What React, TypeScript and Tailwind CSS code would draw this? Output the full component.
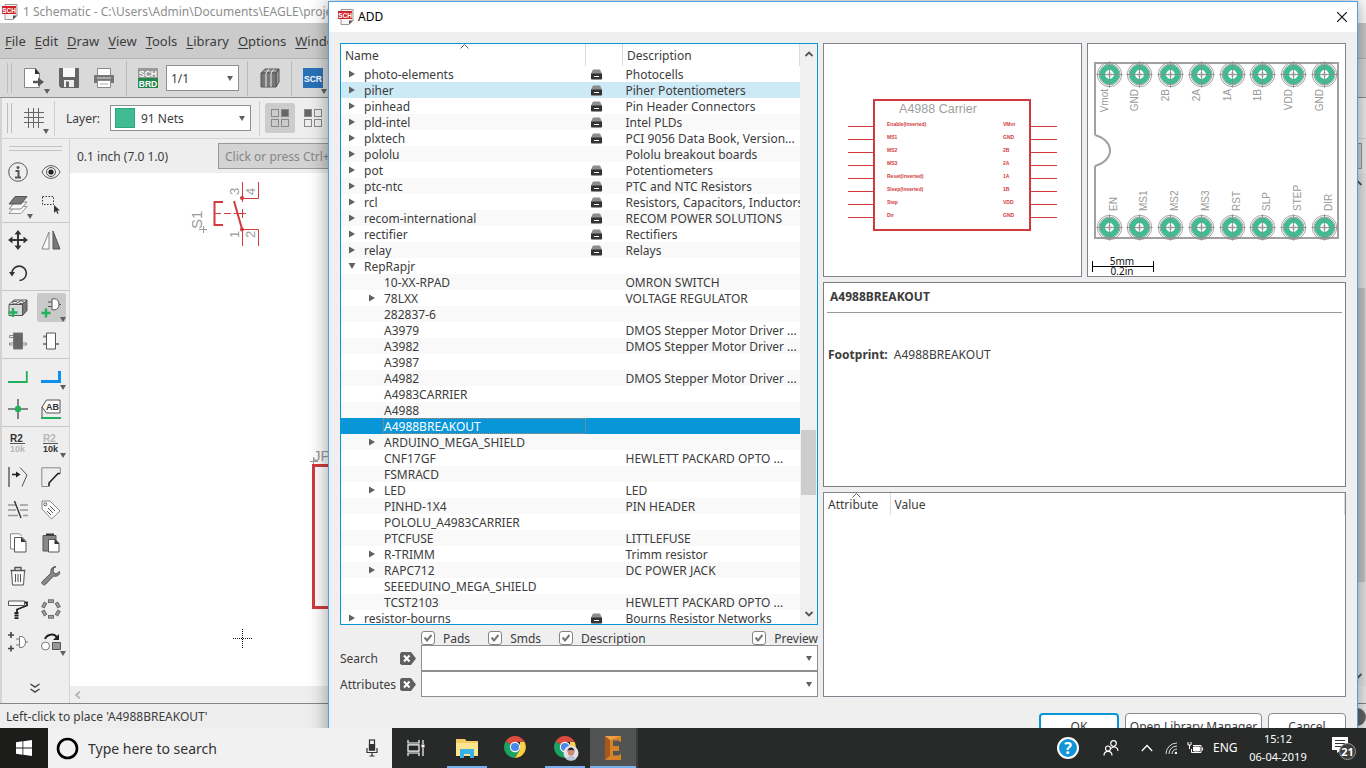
import React from "react";

type Row = {
  name: string;
  desc?: string;
  level?: 0 | 1;
  state?: "closed" | "open" | "leaf";
  managed?: boolean;
};

const rows: Row[] = [
  { name: "photo-elements", desc: "Photocells", managed: true },
  { name: "piher", desc: "Piher Potentiometers", managed: true },
  { name: "pinhead", desc: "Pin Header Connectors", managed: true },
  { name: "pld-intel", desc: "Intel PLDs", managed: true },
  { name: "plxtech", desc: "PCI 9056 Data Book, Version...", managed: true },
  { name: "pololu", desc: "Pololu breakout boards" },
  { name: "pot", desc: "Potentiometers", managed: true },
  { name: "ptc-ntc", desc: "PTC and NTC Resistors", managed: true },
  { name: "rcl", desc: "Resistors, Capacitors, Inductors", managed: true },
  { name: "recom-international", desc: "RECOM POWER SOLUTIONS", managed: true },
  { name: "rectifier", desc: "Rectifiers", managed: true },
  { name: "relay", desc: "Relays", managed: true },
  { name: "RepRapjr", state: "open" },
  { name: "10-XX-RPAD", desc: "OMRON SWITCH", level: 1, state: "leaf" },
  { name: "78LXX", desc: "VOLTAGE REGULATOR", level: 1 },
  { name: "282837-6", level: 1, state: "leaf" },
  { name: "A3979", desc: "DMOS Stepper Motor Driver ...", level: 1, state: "leaf" },
  { name: "A3982", desc: "DMOS Stepper Motor Driver ...", level: 1, state: "leaf" },
  { name: "A3987", level: 1, state: "leaf" },
  { name: "A4982", desc: "DMOS Stepper Motor Driver ...", level: 1, state: "leaf" },
  { name: "A4983CARRIER", level: 1, state: "leaf" },
  { name: "A4988", level: 1, state: "leaf" },
  { name: "A4988BREAKOUT", level: 1, state: "leaf" },
  { name: "ARDUINO_MEGA_SHIELD", level: 1 },
  { name: "CNF17GF", desc: "HEWLETT PACKARD OPTO ...", level: 1, state: "leaf" },
  { name: "FSMRACD", level: 1, state: "leaf" },
  { name: "LED", desc: "LED", level: 1 },
  { name: "PINHD-1X4", desc: "PIN HEADER", level: 1, state: "leaf" },
  { name: "POLOLU_A4983CARRIER", level: 1, state: "leaf" },
  { name: "PTCFUSE", desc: "LITTLEFUSE", level: 1, state: "leaf" },
  { name: "R-TRIMM", desc: "Trimm resistor", level: 1 },
  { name: "RAPC712", desc: "DC POWER JACK", level: 1 },
  { name: "SEEEDUINO_MEGA_SHIELD", level: 1, state: "leaf" },
  { name: "TCST2103", desc: "HEWLETT PACKARD OPTO ...", level: 1, state: "leaf" },
  { name: "resistor-bourns", desc: "Bourns Resistor Networks", managed: true },
];

const SELECTED = "A4988BREAKOUT";
const HOVERED = "piher";

function Down({ className = "" }: { className?: string }) {
  return (
    <svg className={"pointer-events-none h-[5px] w-[6px] " + className} viewBox="0 0 6 5" aria-hidden="true">
      <path d="M0 0h6L3 5z" fill="#606060" />
    </svg>
  );
}

function SchLogo() {
  return (
    <svg className="h-4 w-4 shrink-0" viewBox="0 0 16 16" aria-hidden="true">
      <path d="M3 .5h12v11l-4 4H3z" fill="#f4f4f4" stroke="#9a9a9a" />
      <path d="M15 11.5h-4v4z" fill="#555" />
      <rect x="0" y="2" width="14" height="8" fill="#d2232a" />
      <text x="7" y="8.500" textAnchor="middle" fontSize="6.500" fontWeight="700" fill="#fff" fontFamily="Liberation Sans, sans-serif">SCH</text>
    </svg>
  );
}

function Icon({ children }: { children: React.ReactNode }) {
  return (
    <svg className="block h-5 w-5 shrink-0" viewBox="0 0 20 20" fill="none" stroke="#555" aria-hidden="true">
      {children}
    </svg>
  );
}

const label = { fontFamily: "Liberation Sans, sans-serif", fontWeight: 700, stroke: "none" };

const icons: Record<string, React.ReactNode> = {
  info: (
    <>
      <circle cx="10" cy="10" r="9.300" />
      <path d="M7.500 9h3V15M7 15.500h6" strokeWidth="2" />
      <circle cx="10" cy="5.500" r="1.500" fill="#555" stroke="none" />
    </>
  ),
  eye: (
    <>
      <path d="M1 10c4-8.500 14-8.500 18 0-4 8.500-14 8.500-18 0z" />
      <circle cx="10" cy="10" r="4.500" />
      <circle cx="10" cy="10" r="2.600" fill="#222" stroke="none" />
    </>
  ),
  layers: (
    <>
      <path d="M1 18.500L7 11.500h12l-6 7z" fill="#f8f8f8" stroke="#999" />
      <path d="M1 14L7 7h12l-6 7z" fill="#f8f8f8" stroke="#888" />
      <path d="M1 9L7 1.500h12L13 9z" fill="#777" />
    </>
  ),
  group: (
    <>
      <path d="M1.500 1.500h11v8h-11z" stroke="#333" strokeDasharray="1.500 1.500" />
      <path d="M13 10v8l2-2 1.500 3 1-.5-1.300-3H19z" fill="#333" stroke="none" />
    </>
  ),
  move: (
    <path
      d="M10 0l3.500 4.500h-2.500v4.500h4.500V6.500l4.500 3.500-4.500 3.500V11H11v4.500h2.500L10 20l-3.500-4.500H9V11H4.500v2.500L0 10l4.500-3.500V9H9V4.500H6.500z"
      fill="#333"
      stroke="none"
    />
  ),
  mirror: (
    <>
      <path d="M8 2v17H1z" fill="#fafafa" stroke="#888" />
      <path d="M12 1v18h7z" fill="#777" />
    </>
  ),
  rotate: (
    <>
      <path d="M4 9.500A7.200 7.200 0 1 1 11.500 17.500" stroke="#333" strokeWidth="1.600" />
      <path d="M1 9h6l-3 4.500z" fill="#333" stroke="none" />
    </>
  ),
  library: (
    <>
      <path d="M1 6.500L6 2h13l-4.500 4.500z" fill="#eee" />
      <path d="M1 6.500h13.500v11H1z" fill="#d8d8d8" />
      <path d="M14.500 6.500L19 2v10.500l-4.500 5z" fill="#777" />
      <ellipse cx="7" cy="4.700" rx="2.500" ry="1.300" fill="#fff" />
      <ellipse cx="13" cy="4.200" rx="2.500" ry="1.300" fill="#fff" />
      <path d="M5 10v9M.5 14.500h9" stroke="#1fb25a" strokeWidth="2.400" />
    </>
  ),
  addPart: (
    <>
      <path d="M11 .8h2.500c3 0 4.500 2.500 4.500 5.500s-1.500 5.500-4.500 5.500H11zM7 4h4M7 8.500h4M18 6.500h2" fill="#fff" />
      <path d="M5 10.500v9M.5 15h9" stroke="#1fb25a" strokeWidth="2.400" />
    </>
  ),
  chipDark: (
    <>
      <path d="M1.500 4.500h4v2h-4zM1.500 12h4v2h-4zM14.500 12h4v2h-4z" stroke="#888" />
      <path d="M5.500 2h9v16h-9z" fill="#666" stroke="#777" />
    </>
  ),
  chipLight: (
    <>
      <path d="M2 5.500h4M2 13h4M14 13h4" stroke="#888" strokeWidth="2" />
      <path d="M5.500 2h9v16h-9z" fill="#fff" />
    </>
  ),
  net: <path d="M0 16h18.800V5" stroke="#1fb25a" strokeWidth="1.800" />,
  bus: <path d="M0 15.500h18.500V5" stroke="#0b90ee" strokeWidth="3" />,
  junction: (
    <>
      <path d="M10 0v20M0 10h20" stroke="#666" strokeWidth="1.600" />
      <circle cx="10" cy="10" r="3.200" fill="#1fb25a" stroke="none" />
    </>
  ),
  netLabel: (
    <>
      <path d="M1 19V8l4.500-7H19v13H5.500L1 8" fill="#fafafa" />
      <text x="11.500" y="11" textAnchor="middle" fontSize="9" fill="#333" {...label}>AB</text>
      <path d="M0 19h20" stroke="#1fb25a" strokeWidth="2" />
    </>
  ),
  nameTool: (
    <>
      <text x="8.500" y="8" textAnchor="middle" fontSize="10" fill="#333" {...label}>R2</text>
      <path d="M2 9.500h15" />
      <text x="9.500" y="18" textAnchor="middle" fontSize="9" fill="#b8b8b8" {...label}>10k</text>
    </>
  ),
  valueTool: (
    <>
      <text x="8.500" y="8" textAnchor="middle" fontSize="10" fill="#b8b8b8" {...label}>R2</text>
      <path d="M2 9.500h15" />
      <text x="9.500" y="18" textAnchor="middle" fontSize="9" fill="#333" {...label}>10k</text>
    </>
  ),
  miter: (
    <>
      <path d="M1 0v20" strokeWidth="1.400" />
      <path d="M12 .5l7 7.500-5 11.500" />
      <path d="M4 7.500h5" stroke="#222" strokeWidth="1.600" />
      <path d="M8 4.500l4.500 3-4.500 3z" fill="#222" stroke="none" />
    </>
  ),
  split: (
    <>
      <path d="M7 19.500H.8V.8h18.500V7" stroke="#888" />
      <path d="M19 6.500h-2L8 16v3.500" stroke="#222" strokeWidth="1.600" />
    </>
  ),
  slice: (
    <>
      <path d="M0 5h8M12 5h8M0 10h8M12 10h8M0 15.500h10M15 15.500h5" stroke="#999" strokeWidth="1.400" />
      <path d="M6.500 1l6.500 17" stroke="#333" strokeWidth="1.400" />
    </>
  ),
  tag: (
    <>
      <path d="M1 1h8l10 10-8.500 8L1 9z" fill="#fafafa" stroke="#888" />
      <circle cx="4.300" cy="4.300" r="1.500" />
      <path d="M9 6l5 5M7 8l5 5M6 11l4 4" />
    </>
  ),
  copy: (
    <>
      <path d="M7 16H2.500V.8h9l2 2.200" fill="#fff" stroke="#888" />
      <path d="M6.500 4.500h8l3.500 4V19H6.500z" fill="#fff" />
      <path d="M13 4v5h5z" fill="#333" stroke="none" />
    </>
  ),
  paste: (
    <>
      <path d="M2 2.500h13V18H2z" fill="#888" />
      <path d="M5 1.500h8" stroke="#333" strokeWidth="2" />
      <path d="M7.500 6.500h7l3.500 4V19H7.500z" fill="#fff" />
      <path d="M13.500 6v5h5z" fill="#333" stroke="none" />
    </>
  ),
  trash: (
    <>
      <path d="M3.500 5l1 14h11l1-14" fill="#f8f8f8" />
      <path d="M2.500 4.500h15M7 4V1.500h6V4" strokeWidth="1.400" />
      <path d="M7.500 8v8M10 8v8M12.500 8v8" />
    </>
  ),
  wrench: (
    <path
      d="M18.500 5.500L15 8l-3-2 .5-4L15 .8c-3-.6-6 2-5 6.200L1.300 15.500c-1.500 1.500 1 4.500 3 3L12.500 10c4 1 7-1.500 6-4.500z"
      fill="#888"
      stroke="#555"
    />
  ),
  paint: (
    <>
      <path d="M.5 2h16v4.500H.5z" fill="#fafafa" />
      <path d="M17 3.500h2v3l-10 4V13" stroke="#222" strokeWidth="1.800" />
      <path d="M8.500 13v7" stroke="#222" strokeWidth="4" strokeDasharray="2 .6" />
    </>
  ),
  optimize: (
    <g fill="#a0a0a0" stroke="#666" strokeWidth=".9">
      {[0, 60, 120, 180, 240, 300].map((a) => (
        <rect key={a} x="7.500" y=".8" width="5" height="2.800" transform={`rotate(${a} 10 10)`} />
      ))}
    </g>
  ),
  gate: (
    <>
      <path d="M3 0v6M0 3h6M3 13.500v6M0 16.500h6" stroke="#444" strokeWidth="1.600" />
      <path d="M11.500 4.500h1.500c3 0 4.500 2.500 4.500 5.500s-1.500 5.500-4.500 5.500h-1.500zM8 7h3.500M8 13h3.500M17.500 10H20" fill="#fff" stroke="#777" />
    </>
  ),
  replace: (
    <>
      <path d="M4 7c2-5 9-6 12-1.500" stroke="#222" strokeWidth="2" />
      <path d="M18 2v6h-6z" fill="#222" stroke="none" />
      <circle cx="4.500" cy="14" r="4" fill="#fff" stroke="#777" />
      <path d="M11.500 10.500h8v7h-8z" fill="#999" />
    </>
  ),
};

const groups: { name: string; icon: string; menu?: boolean; on?: boolean }[][] = [
  [
    { name: "Info", icon: "info" },
    { name: "Show", icon: "eye" },
    { name: "Layer settings", icon: "layers", menu: true },
    { name: "Group", icon: "group" },
  ],
  [
    { name: "Move", icon: "move" },
    { name: "Mirror", icon: "mirror" },
    { name: "Rotate", icon: "rotate" },
  ],
  [
    { name: "Design block", icon: "library" },
    { name: "Add part", icon: "addPart", menu: true, on: true },
    { name: "Replace", icon: "chipDark" },
    { name: "Package", icon: "chipLight" },
  ],
  [
    { name: "Net", icon: "net" },
    { name: "Bus", icon: "bus", menu: true },
    { name: "Junction", icon: "junction" },
    { name: "Label", icon: "netLabel" },
  ],
  [
    { name: "Name", icon: "nameTool" },
    { name: "Value", icon: "valueTool", menu: true },
    { name: "Miter", icon: "miter" },
    { name: "Split", icon: "split" },
    { name: "Slice", icon: "slice" },
    { name: "Attribute", icon: "tag" },
    { name: "Copy", icon: "copy" },
    { name: "Paste", icon: "paste" },
    { name: "Delete", icon: "trash" },
    { name: "Change", icon: "wrench" },
    { name: "Paint roller", icon: "paint" },
    { name: "Optimize", icon: "optimize" },
    { name: "Invoke", icon: "gate" },
    { name: "Swap", icon: "replace", menu: true },
  ],
];

function ToolPanel() {
  return (
    <div className="flex w-[70px] shrink-0 flex-col border-r border-l-2 border-[#d4d4d4] bg-[#eeeeee]">
      <div className="mx-[7px] mt-[7px] h-[5px] shrink-0 border-y border-[#c4c4c4]" />
      <div className="mt-1 flex flex-col gap-px">
        {groups.map((g, i) => (
          <div key={i} className={"grid grid-cols-[33px_33px] " + (i ? "border-t border-[#c6c6c6]" : "")}>
            {g.map((t) => (
              <button
                key={t.name}
                aria-label={t.name}
                className={"relative m-0.5 h-[29px] w-[29px] rounded-[2px] p-1 " + (t.on ? "bg-[#c9c9c9]" : "")}
              >
                <Icon>{icons[t.icon]}</Icon>
                {t.menu && <Down className="absolute right-0 bottom-0" />}
              </button>
            ))}
          </div>
        ))}
      </div>
      <button aria-label="More tools" className="mx-auto mt-6 pr-0.5">
        <svg className="h-3 w-3" viewBox="0 0 12 12" fill="none" stroke="#444" strokeWidth="1.500">
          <path d="M1.500 2L6 5l4.500-3M1.500 7L6 10l4.500-3" />
        </svg>
      </button>
    </div>
  );
}

const menus = ["File", "Edit", "Draw", "View", "Tools", "Library", "Options", "Window"];

function Grip() {
  return <div className="mr-3 h-[30px] w-[5px] shrink-0 border-x border-[#bdbdbd]" />;
}

function Sep({ className = "" }: { className?: string }) {
  return <div className={"h-[35px] w-px shrink-0 bg-[#b9b9b9] " + className} />;
}

function MainToolbar() {
  return (
    <div className="flex h-[39px] shrink-0 items-center border-b border-[#8d8d8d] bg-[#d9d9d9] pl-[7px]">
      <Grip />
      <button aria-label="Open" className="relative h-5 w-[26px]">
        <Icon>
          <path d="M.5.500h11l4 5v14H.5z" fill="#fff" stroke="#888" />
          <path d="M11 0v6h5z" fill="#333" stroke="none" />
          <path d="M9 14h6" stroke="#555" strokeWidth="2.500" />
          <path d="M14 9.500l6 4.500-6 4.500z" fill="#555" stroke="none" />
        </Icon>
        <Down className="absolute right-0 -bottom-1.5" />
      </button>
      <button aria-label="Save" className="ml-[9px]">
        <Icon>
          <path d="M0 0h20v20H2l-2-2z" fill="#666" stroke="none" />
          <path d="M4 0h12v9H4z" fill="#fafafa" stroke="none" />
          <path d="M5 12h10v7H5z" fill="#eee" stroke="none" />
          <path d="M7 13.500h3V19H7z" fill="#666" stroke="none" />
        </Icon>
      </button>
      <button aria-label="Print" className="ml-[15px]">
        <Icon>
          <path d="M3.500.500h13v7h-13z" fill="#fff" stroke="#888" />
          <path d="M0 7h20v8H0z" fill="#777" stroke="none" />
          <path d="M3 10h14" stroke="#ddd" />
          <path d="M3.500 12.500h13v7h-13z" fill="#fff" stroke="#888" />
          <path d="M6 16h8" stroke="#aaa" />
        </Icon>
      </button>
      <Sep className="mr-[11px] ml-3" />
      <button aria-label="Switch to board">
        <Icon>
          <path d="M0 0h20v10H0z" fill="#999" stroke="none" />
          <path d="M0 10h20v10H0z" fill="#23864a" stroke="none" />
          <text x="10" y="8.500" textAnchor="middle" fontSize="8.500" fill="#fff" {...label}>SCH</text>
          <text x="10" y="18.500" textAnchor="middle" fontSize="8.500" fill="#fff" {...label}>BRD</text>
        </Icon>
      </button>
      <div className="relative ml-2 flex w-[73px] items-center border border-[#8f8f8f] bg-white">
        <select aria-label="Sheet" className="h-6 w-full appearance-none bg-transparent pt-0.5 pl-1 text-xs">
          <option>1/1</option>
        </select>
        <Down className="absolute right-[5px]" />
      </div>
      <Sep className="mr-3 ml-2" />
      <button aria-label="Library manager">
        <Icon>
          <path d="M1 5l4-4h14l-3 4zM16 5l3-4v13l-3 5z" fill="#999" />
          <path d="M1 5h15v14H1z" fill="#777" />
          <path d="M6 5v14M11 5v14M6 5l3-4M11 5l3-4" stroke="#eee" />
        </Icon>
      </button>
      <Sep className="mr-[11px] ml-[11px]" />
      <button aria-label="Run script" className="relative">
        <Icon>
          <path d="M0 0h20v20H0z" fill="#2a72b8" stroke="none" />
          <text x="10" y="13.500" textAnchor="middle" fontSize="8.500" fill="#fff" {...label}>SCR</text>
        </Icon>
        <Down className="absolute -right-1 -bottom-1.5" />
      </button>
    </div>
  );
}

function Squares({ at }: { at: "left" | "right" }) {
  return (
    <svg className="h-[18px] w-[18px]" viewBox="0 0 18 18" fill="none" stroke="#888" aria-hidden="true">
      <rect x=".5" y=".5" width="7" height="7" fill={at === "left" ? "#666" : "none"} />
      <rect x="10.500" y=".5" width="7" height="7" fill={at === "right" ? "#666" : "none"} />
      <rect x=".5" y="10.500" width="7" height="7" />
      <rect x="10.500" y="10.500" width="7" height="7" />
    </svg>
  );
}

function LayerToolbar() {
  return (
    <div className="flex h-[41px] shrink-0 items-center border-b border-l-2 border-[#d4d4d4] bg-[#eeeeee] pl-[5px]">
      <Grip />
      <button aria-label="Grid" className="relative h-5 w-[25px]">
        <Icon>
          <path d="M4.500 0v20M9.500 0v20M14.500 0v20M0 4.500h20M0 9.500h20M0 14.500h20" stroke="#666" />
        </Icon>
        <Down className="absolute right-0 -bottom-1.5" />
      </button>
      <Sep className="mr-[11px] ml-[5px] bg-[#cfcfcf]" />
      <label htmlFor="layer" className="w-11 pt-0.5 text-xs">
        Layer:
      </label>
      <div className="relative flex w-[141px] items-center border border-[#8f8f8f] bg-white pl-1">
        <span className="h-5 w-5 shrink-0 border border-[#2fa57c] bg-[#3fbc93]" />
        <select id="layer" className="h-6 w-full appearance-none bg-transparent pt-0.5 pl-1.5 text-xs">
          <option>91 Nets</option>
        </select>
        <Down className="absolute right-[5px]" />
      </div>
      <Sep className="mr-[5px] ml-2 bg-[#cfcfcf]" />
      <button aria-label="Layer preset 1" className="rounded-[2px] bg-[#cccccc] p-1.5">
        <Squares at="right" />
      </button>
      <button aria-label="Layer preset 2" className="ml-px p-2">
        <Squares at="left" />
      </button>
    </div>
  );
}

function Sheet() {
  return (
    <svg className="h-[513px] w-[258px] shrink-0" viewBox="70 173 258 513" fill="none" stroke="#d23a3e" aria-hidden="true">
      <path d="M242.500 182v20M242.500 198.500h16V182M242.500 246v-16.500h16V246" />
      <path d="M223 202h-8.500v23h8.500" strokeWidth="2" />
      <path d="M215 213.500h6M224 213.500h7M234 213.500h12M242.500 209v9" />
      <path d="M234 201l8 28" strokeWidth="2" />
      <circle cx="242" cy="198" r="2" fill="#d23a3e" stroke="none" />
      <circle cx="242" cy="229.500" r="2" fill="#d23a3e" stroke="none" />
      <g fill="#9a9a9a" stroke="none" fontFamily="Liberation Sans, sans-serif">
        <text transform="translate(202 229) rotate(-90)" fontSize="15">S1</text>
        <text transform="translate(239 195) rotate(-90)" fontSize="13">3</text>
        <text transform="translate(255 195) rotate(-90)" fontSize="13">4</text>
        <text transform="translate(239 238) rotate(-90)" fontSize="13">1</text>
        <text transform="translate(255 238) rotate(-90)" fontSize="13">2</text>
        <text x="313" y="461" fontSize="15">JP1</text>
      </g>
      <path d="M199 229.500h8M203.500 226v7M310 461.500h8M313.500 457v8" stroke="#999" />
      <path d="M330 465.500h-16.500v142H330" strokeWidth="3" />
      <path d="M233 638.500h20M242.500 629v19" stroke="#111" strokeDasharray="1 1" />
    </svg>
  );
}

function MainWindow() {
  return (
    <div className="flex h-full flex-col text-[#3c3c3c]">
      <div className="flex h-[23px] shrink-0 items-center gap-[5px] bg-white pl-0.5 text-xs text-[#8d8d8d]">
        <SchLogo />
        <span>1 Schematic - C:\Users\Admin\Documents\EAGLE\projects</span>
      </div>
      <div className="flex h-9 shrink-0 items-center gap-[9px] border-b border-[#b4b4b4] bg-[#cbcbcb] pt-0.5 pl-[5px] text-[13px]">
        {menus.map((m) => (
          <button key={m}>
            <span className="underline underline-offset-2">{m[0]}</span>
            {m.slice(1)}
          </button>
        ))}
      </div>
      <MainToolbar />
      <LayerToolbar />
      <div className="flex min-h-0 flex-1">
        <ToolPanel />
        <div className="flex min-w-0 flex-1 flex-col bg-white">
          <div className="flex h-[34px] shrink-0 items-center bg-[#eeeeee] pr-1 pl-[7px] text-xs">
            <span className="w-[141px] pt-0.5">0.1 inch (7.0 1.0)</span>
            <input
              aria-label="Command line"
              placeholder="Click or press Ctrl+L key to activate command line mode"
              className="h-[26px] min-w-0 flex-1 border border-[#9a9a9a] bg-[#d3d3d3] px-1.5 placeholder:text-[#868686]"
            />
          </div>
          <div className="flex min-h-0 flex-1">
            <div className="min-w-0 flex-1 overflow-hidden">
              <Sheet />
            </div>
            <div className="flex w-4 shrink-0 flex-col items-center bg-[#e6e6e6] py-1.5">
              <Chevron dir="up" />
              <div className="mt-[101px] mb-[90px] w-full flex-1 border-r border-[#e0e0e0] bg-[#c8c8c8]" />
              <Chevron dir="down" />
            </div>
          </div>
          <div className="flex h-[17px] shrink-0 items-center bg-[#eeeeee] pl-1">
            <svg className="h-2 w-2" viewBox="0 0 8 8" fill="none" stroke="#b5b5b5" strokeWidth="1.800" aria-hidden="true">
              <path d="M6 .5L2 4l4 3.500" />
            </svg>
          </div>
        </div>
      </div>
      <div className="flex h-[25px] shrink-0 items-center justify-between border-t border-[#868686] bg-[#eeeeee] pt-0.5 pl-1.5 text-xs">
        <span>Left-click to place 'A4988BREAKOUT'</span>
        <span className="h-[18px] w-[18px] rounded-full bg-[#666]" />
      </div>
    </div>
  );
}

function Chevron({ dir }: { dir: "up" | "down" }) {
  return (
    <svg className="h-2 w-2.5 shrink-0" viewBox="0 0 10 8" fill="none" stroke="#555" strokeWidth="1.800" aria-hidden="true">
      <path d={dir === "up" ? "M1.500 6L5 2.500 8.500 6" : "M1.500 2L5 5.500 8.500 2"} />
    </svg>
  );
}

function SortMark({ className = "" }: { className?: string }) {
  return (
    <svg className={"absolute top-0 h-[5px] w-[9px] " + className} viewBox="0 0 9 5" fill="none" stroke="#666" aria-hidden="true">
      <path d="M.5 4.500l4-4 4 4" />
    </svg>
  );
}

function Drawer() {
  return (
    <svg className="ml-[5px] block h-[11px] w-[11px]" viewBox="0 0 11 11" aria-label="Managed">
      <path d="M2 .5h7L11 5H0z" fill="#8d8d8d" />
      <path d="M0 4.500h11V10l-.5.500H.5L0 10z" fill="#333" />
      <path d="M3 7.500h5" stroke="#fff" />
    </svg>
  );
}

function Tree() {
  return (
    <div className="flex min-h-0 flex-1 overflow-hidden border border-[#0a95d6] bg-white">
      <div className="min-h-0 min-w-0 flex-1 overflow-hidden">
        <table className="w-full table-fixed border-collapse text-xs whitespace-nowrap">
          <colgroup>
            <col />
            <col className="w-[37px]" />
            <col className="w-[177px]" />
          </colgroup>
          <thead>
            <tr className="h-[22px] text-left">
              <th className="relative border-r border-[#dcdcdc] p-0 pt-0.5 pl-1 font-normal">
                <SortMark className="left-[119px]" />
                Name
              </th>
              <th className="border-r border-[#dcdcdc] p-0" aria-label="Managed" />
              <th className="border-r border-[#dcdcdc] p-0 pt-0.5 pl-1 font-normal">Description</th>
            </tr>
          </thead>
          <tbody>
            {rows.map((r, i) => {
              const selected = r.name === SELECTED;
              const bg = selected
                ? "bg-[#0996d9] text-white"
                : r.name === HOVERED
                  ? "bg-[#cce9f6]"
                  : i % 2
                    ? "bg-[#f9f9f9]"
                    : "bg-white";
              return (
                <tr key={r.name} className={"h-4 " + bg}>
                  <td className="p-0">
                    <div className={"flex h-4 items-center " + (r.level ? "pl-[27px]" : "pl-[7px]")}>
                      <span className="w-[15px] shrink-0">
                        {r.state !== "leaf" && (
                          <svg className="h-2 w-2" viewBox="0 0 8 8" aria-hidden="true">
                            <path d={r.state === "open" ? "M.5 1h7L4 7z" : "M1 .5v7L7 4z"} fill="#606060" />
                          </svg>
                        )}
                      </span>
                      <span
                        className={
                          "h-4 flex-1 pl-px leading-[18px] " +
                          (selected ? "outline-1 -outline-offset-1 outline-[#b98a63] outline-dotted" : "")
                        }
                      >
                        {r.name}
                      </span>
                    </div>
                  </td>
                  <td className="p-0">{r.managed && <Drawer />}</td>
                  <td className="p-0 pl-[3px]">
                    <div className="h-4 leading-[18px]">{r.desc}</div>
                  </td>
                </tr>
              );
            })}
          </tbody>
        </table>
      </div>
      <div className="flex w-[17px] shrink-0 flex-col items-center bg-[#f0f0f0] py-1.5">
        <Chevron dir="up" />
        <div className="flex-[372]" />
        <div className="w-[15px] flex-[65] bg-[#cdcdcd]" />
        <div className="flex-[115]" />
        <Chevron dir="down" />
      </div>
    </div>
  );
}

function Check({ id, text, className = "" }: { id: string; text: string; className?: string }) {
  return (
    <div className={"flex items-center gap-2 " + className}>
      <span className="relative h-3.5 w-3.5">
        <input
          id={id}
          type="checkbox"
          defaultChecked
          className="block h-3.5 w-3.5 appearance-none rounded-[3px] border border-[#858585] bg-white"
        />
        <svg className="pointer-events-none absolute top-[3px] left-[3px] h-2 w-2" viewBox="0 0 8 8" fill="none" stroke="#777" strokeWidth="2" aria-hidden="true">
          <path d="M.5 3.500L3 6.500 7.500 1" />
        </svg>
      </span>
      <label htmlFor={id} className="pt-0.5">
        {text}
      </label>
    </div>
  );
}

function ClearButton({ name }: { name: string }) {
  return (
    <button aria-label={name} className="w-[21px] shrink-0">
      <svg className="h-[13px] w-4" viewBox="0 0 16 13">
        <path d="M1.500 0h9.500l5 6.500L11 13H1.500L0 11.500v-10z" fill="#606060" />
        <path d="M4 3.500l5.500 6M9.500 3.500L4 9.500" stroke="#fff" strokeWidth="2" />
      </svg>
    </button>
  );
}

function Field({ id, text }: { id: string; text: string }) {
  return (
    <div className="flex items-center">
      <label htmlFor={id} className="w-[60px] shrink-0 pt-0.5">
        {text}
      </label>
      <ClearButton name={"Clear " + text} />
      <div className="relative flex flex-1 items-center border border-[#8f8f8f] bg-white">
        <input id={id} className="h-6 w-full min-w-0 bg-transparent px-1 outline-none" />
        <Down className="absolute right-[5px]" />
      </div>
    </div>
  );
}

const leftPins = ["Enable(Inverted)", "MS1", "MS2", "MS3", "Reset(Inverted)", "Sleep(Inverted)", "Step", "Dir"];
const rightPins = ["VMot", "GND", "2B", "2A", "1A", "1B", "VDD", "GND"];

function SymbolPreview() {
  return (
    <svg className="h-full w-full" viewBox="824 44 257 232" role="img" aria-label="Symbol preview">
      <rect x="874" y="100" width="156" height="130" fill="none" stroke="#d23a3e" strokeWidth="2" />
      <text x="938" y="113" textAnchor="middle" fontSize="12.500" fill="#a0a0a0" fontFamily="Liberation Sans, sans-serif">A4988 Carrier</text>
      {leftPins.map((p, i) => (
        <g key={i} fill="#d23a3e" fontFamily="Liberation Sans, sans-serif" fontSize="5" fontWeight="700">
          <path d={`M848 ${126.5 + 13 * i}h25M1031 ${126.5 + 13 * i}h26`} stroke="#d23a3e" />
          <text x="887" y={126 + 13 * i}>{p}</text>
          <text x="1003" y={126 + 13 * i}>{rightPins[i]}</text>
        </g>
      ))}
    </svg>
  );
}

const padX = [1109.5, 1139.5, 1170.5, 1201.5, 1232.5, 1262.5, 1293.5, 1324.5];
const topPads = ["Vmot", "GND", "2B", "2A", "1A", "1B", "VDD", "GND"];
const bottomPads = ["EN", "MS1", "MS2", "MS3", "RST", "SLP", "STEP", "DIR"];

function Pad({ x, y }: { x: number; y: number }) {
  return (
    <g fill="none" stroke="#8c8c8c">
      <circle cx={x} cy={y} r="7.200" stroke="#3fbc93" strokeWidth="5.600" />
      <circle cx={x} cy={y} r="12.200" strokeWidth=".8" />
      <circle cx={x} cy={y} r="10.500" strokeWidth=".8" />
      <path d={`M${x - 2.5} ${y}l2.500-2.500 2.500 2.500-2.500 2.500z`} strokeWidth=".6" />
      <path d={`M${x - 13} ${y}h26M${x} ${y - 13}v26`} strokeWidth=".9" />
    </g>
  );
}

function FootprintPreview() {
  return (
    <svg className="h-full w-full" viewBox="1088 44 257 232" role="img" aria-label="Footprint preview">
      <path d="M1095 135V63h243v175h-243v-72" fill="none" stroke="#a0a0a0" strokeWidth="2" />
      <path d="M1095 135c20 6 20 25 0 31" fill="none" stroke="#a0a0a0" strokeWidth="2" />
      {padX.map((x, i) => (
        <g key={i} fill="#999" fontFamily="Liberation Sans, sans-serif" fontSize="10">
          <Pad x={x} y={74.5} />
          <Pad x={x} y={227.5} />
          <text transform={`translate(${x - 2} 89) rotate(-90)`} textAnchor="end">{topPads[i]}</text>
          <text transform={`translate(${x + 7} 211) rotate(-90)`}>{bottomPads[i]}</text>
        </g>
      ))}
      <path d="M1092.500 261v11M1092 266.500h61M1153.500 261v11" stroke="#000" fill="none" />
      <g fontFamily="Noto Sans, sans-serif" fontSize="10" textAnchor="middle" fill="#111">
        <text x="1122" y="265">5mm</text>
        <text x="1122" y="275">0.2in</text>
      </g>
    </svg>
  );
}

function AddDialog() {
  return (
    <section
      role="dialog"
      aria-label="ADD"
      className="absolute top-px right-2 -bottom-6 left-[328px] flex flex-col border border-[#4f9fe6] bg-[#efefef] text-xs text-[#3c3c3c] shadow-[0_0_18px_rgba(0,0,0,0.4)]"
    >
      <header className="flex h-[30px] shrink-0 items-center gap-1 bg-white pr-2.5 pl-[9px] text-black">
        <SchLogo />
        <h1 className="flex-1">ADD</h1>
        <button aria-label="Close">
          <svg className="h-2.5 w-2.5" viewBox="0 0 10 10" stroke="#111" strokeWidth="1.200">
            <path d="M0 0l10 10M10 0L0 10" />
          </svg>
        </button>
      </header>
      <div className="flex min-h-0 flex-1 flex-col px-[11px] pt-[11px] pb-[11px]">
        <div className="grid min-h-0 flex-1 grid-cols-[478fr_523fr] gap-[5px]">
          <div className="flex min-h-0 min-w-0 flex-col">
            <Tree />
            <div className="mt-[5px] flex h-[15px] shrink-0 items-center gap-[18px] pl-[81px]">
              <Check id="pads" text="Pads" />
              <Check id="smds" text="Smds" />
              <Check id="description" text="Description" />
              <Check id="preview" text="Preview" className="ml-auto" />
            </div>
            <Field id="search" text="Search" />
            <Field id="attributes" text="Attributes" />
          </div>
          <div className="grid min-h-0 min-w-0 grid-rows-[234fr_205fr_205fr] gap-[5px]">
            <div className="grid min-h-0 grid-cols-2 gap-[5px]">
              <div className="min-h-0 border border-[#83838f] bg-white">
                <SymbolPreview />
              </div>
              <div className="min-h-0 border border-[#83838f] bg-white">
                <FootprintPreview />
              </div>
            </div>
            <div className="border border-[#7d7d7d] bg-white px-[3px] pt-1.5">
              <h2 className="border-b border-[#9a9a9a] px-[3px] pb-[7px] font-bold">A4988BREAKOUT</h2>
              <p className="mt-[34px] px-px">
                <b className="mr-[3px]">Footprint:</b> A4988BREAKOUT
              </p>
            </div>
            <div className="border border-[#83838f] bg-white">
              <table className="w-full table-fixed border-collapse text-left">
                <thead>
                  <tr className="h-[22px]">
                    <th className="relative w-[66px] border-r border-[#dcdcdc] p-0 pt-0.5 pl-1 font-normal">
                      <SortMark className="left-7" />
                      Attribute
                    </th>
                    <th className="border-r border-[#dcdcdc] p-0 pt-0.5 pl-1 font-normal">Value</th>
                  </tr>
                </thead>
              </table>
            </div>
          </div>
        </div>
        <div className="mt-4 flex shrink-0 justify-end gap-1.5">
          <button className="h-[27px] w-20 rounded-[4px] border-2 border-[#0a95d6] bg-white">OK</button>
          <button className="h-[27px] w-[137px] rounded-[4px] border border-[#8a8a8a] bg-white">Open Library Manager</button>
          <button className="h-[27px] w-[78px] rounded-[4px] border border-[#8a8a8a] bg-white">Cancel</button>
        </div>
      </div>
    </section>
  );
}

function Chrome({ user = false }: { user?: boolean }) {
  return (
    <svg className="h-[26px] w-[26px]" viewBox="0 0 26 26" aria-hidden="true">
      <path d="M12 12L2.500 6.500A11 11 0 0 1 21.500 6.500L12 7z" fill="#dd4b3e" />
      <path d="M2.500 6.500A11 11 0 0 0 12 23l5-8.500-5-2.500z" fill="#1ca261" />
      <path d="M21.500 6.700A11 11 0 0 1 12 23l5-8.500V7H12z" fill="#fdd042" />
      <circle cx="12" cy="12" r="5.200" fill="#fff" />
      <circle cx="12" cy="12" r="4.100" fill="#4a87ee" />
      {user && (
        <>
          <circle cx="18" cy="18" r="7.500" fill="#e6dfe6" />
          <path d="M13 24c1-4 9-4 10 0-2 2-8 2-10 0z" fill="#b8c4d8" />
          <circle cx="18" cy="17.500" r="3.200" fill="#c98d76" />
          <path d="M14.500 17c-.5-6 7.500-6 7 0l-1-2h-5z" fill="#2a2224" />
        </>
      )}
    </svg>
  );
}

function Taskbar() {
  return (
    <footer className="flex h-10 shrink-0 items-center bg-[#282a2a] text-xs text-white">
      <button aria-label="Start" className="flex h-full w-12 shrink-0 items-center justify-center bg-[#1c1d1a]">
        <svg className="h-4 w-4" viewBox="0 0 16 16" fill="#fff">
          <path d="M0 2.200L6.500 1.300v6.200H0zM7.300 1.200L16 0v7.500H7.300zM0 8.400h6.500v6.300L0 13.800zM7.300 8.400H16V16l-8.700-1.200z" />
        </svg>
      </button>
      <div className="flex h-full w-[344px] shrink-0 items-center gap-[9px] bg-[#f1f1f1] pr-[14px] pl-2 text-[#333]">
        <svg className="h-[23px] w-[23px] shrink-0" viewBox="0 0 23 23" fill="none" stroke="#000" strokeWidth="2.600" aria-hidden="true">
          <circle cx="11.500" cy="11.500" r="9.500" />
        </svg>
        <input
          aria-label="Search"
          placeholder="Type here to search"
          className="min-w-0 flex-1 bg-transparent pt-0.5 text-sm outline-none placeholder:text-[#333]"
        />
        <svg className="h-[18px] w-3 shrink-0" viewBox="0 0 12 18" fill="none" stroke="#333" strokeWidth="1.200" aria-hidden="true">
          <rect x="3.500" y="1" width="5" height="10" />
          <path d="M3.500 5.500h5V11h-5z" fill="#333" />
          <path d="M1 9v4.500h10V9M6 13.500V17M3.500 17h5" />
        </svg>
      </div>
      <button aria-label="Task view" className="flex h-full w-12 items-center justify-center">
        <svg className="h-4 w-[18px]" viewBox="0 0 18 16" fill="none" stroke="#fff" strokeWidth="1.200">
          <path d="M1 0v3h11V0M1 16v-3h11v3M1 4.800h11v6.400H1zM16 0v4M16 8v8" />
          <path d="M14.500 4.500h3v3h-3z" fill="#fff" stroke="none" />
        </svg>
      </button>
      <button aria-label="File Explorer" className="relative flex h-full w-[49px] items-center justify-center pl-1">
        <svg className="h-[22px] w-[22px]" viewBox="0 0 22 20">
          <path d="M0 1h9l1.500 2H22v15H0z" fill="#f3cd62" />
          <path d="M0 5h22v13H0z" fill="#fde58e" />
          <path d="M4 20v-9h14v9h-4v-4H8v4z" fill="#38b0e8" />
        </svg>
        <span className="absolute bottom-0 left-[7px] h-0.5 w-10 bg-[#76b0ef]" />
      </button>
      <button aria-label="Chrome" className="flex h-full w-[49px] items-center justify-center pl-1">
        <Chrome />
      </button>
      <button aria-label="Chrome, second profile" className="relative flex h-full w-[52px] items-center justify-center pl-1">
        <Chrome user />
        <span className="absolute bottom-0 left-[7px] h-0.5 w-10 bg-[#76b0ef]" />
      </button>
      <button aria-label="EAGLE" className="relative flex h-full w-12 items-center justify-center border-r-2 border-[#3c3e3e] bg-[#525353]">
        <svg className="h-6 w-4" viewBox="0 0 16 24">
          <path d="M0 0h16v6l-3-1.500H8V10h6v5H8v4.500h5l3-1.500v6H0z" fill="#d8832a" />
          <path d="M0 0l5 4v16l-5 4z" fill="#a8581a" />
          <path d="M5 4l11-4H0z" fill="#eda042" />
        </svg>
        <span className="absolute bottom-0 left-0 h-0.5 w-full bg-[#76b0ef]" />
      </button>
      <div className="ml-auto flex h-full items-center">
        <button aria-label="Help">
          <svg className="h-[22px] w-[22px]" viewBox="0 0 22 22">
            <circle cx="11" cy="11" r="10" fill="#1295d8" stroke="#fff" strokeWidth="2" />
            <text x="11" y="16.500" textAnchor="middle" fontSize="16" fontWeight="700" fill="#fff" fontFamily="Noto Sans, sans-serif">?</text>
          </svg>
        </button>
        <button aria-label="People" className="ml-6">
          <svg className="h-4 w-4" viewBox="0 0 16 16" fill="none" stroke="#fff" strokeWidth="1.200">
            <circle cx="10.500" cy="3.500" r="2.800" />
            <circle cx="5" cy="8.500" r="2.500" />
            <path d="M1 15.500c0-5.500 8-5.500 8 0M8 8.500c3-3 7-1 7 2.500" />
          </svg>
        </button>
        <button aria-label="Show hidden icons" className="ml-[22px]">
          <svg className="h-2 w-3" viewBox="0 0 12 8" fill="none" stroke="#fff" strokeWidth="1.300">
            <path d="M.8 7L6 1.500 11.200 7" />
          </svg>
        </button>
        <svg className="ml-3 h-3 w-3" viewBox="0 0 12 12" fill="none" stroke="#ddd" aria-label="Network">
          <path d="M1 12A11 11 0 0 1 12 1M4 12a8 8 0 0 1 8-8M7 12a5 5 0 0 1 5-5" />
          <circle cx="11" cy="11" r="1.300" fill="#fff" stroke="none" />
        </svg>
        <svg className="ml-2.5 h-3 w-4" viewBox="0 0 16 12" fill="none" stroke="#fff" aria-label="Battery">
          <path d="M6 3.500h8v7H4.500V7M15.500 5.500v3M1 0v3h3V0M2.500 3v4" />
          <path d="M6.500 5h6v4h-6z" fill="#fff" />
        </svg>
        <span className="ml-2.5 w-6">ENG</span>
        <time className="ml-[11px] w-[60px] text-center text-[11px] leading-[18px] whitespace-nowrap">
          15:12
          <br />
          06-04-2019
        </time>
        <button aria-label="21 notifications" className="relative mr-2.5 ml-6 h-6 w-6">
          <svg className="h-6 w-6" viewBox="0 0 24 24">
            <path d="M0 1h16v13H9l-4 3v-3H0z" fill="#fff" />
            <path d="M3 4.500h10M3 7.500h10M3 10.500h7" stroke="#333" />
            <circle cx="15.500" cy="15.500" r="8" fill="#3c3c3c" stroke="#999" />
            <text x="15.500" y="19.500" textAnchor="middle" fontSize="11" fontWeight="700" fill="#fff" fontFamily="Noto Sans, sans-serif">21</text>
          </svg>
        </button>
      </div>
    </footer>
  );
}

export default function App() {
  return (
    <div className="flex h-screen flex-col overflow-hidden font-['Noto_Sans',sans-serif]">
      <main className="relative min-h-0 flex-1 overflow-hidden">
        <MainWindow />
        <AddDialog />
      </main>
      <Taskbar />
    </div>
  );
}
